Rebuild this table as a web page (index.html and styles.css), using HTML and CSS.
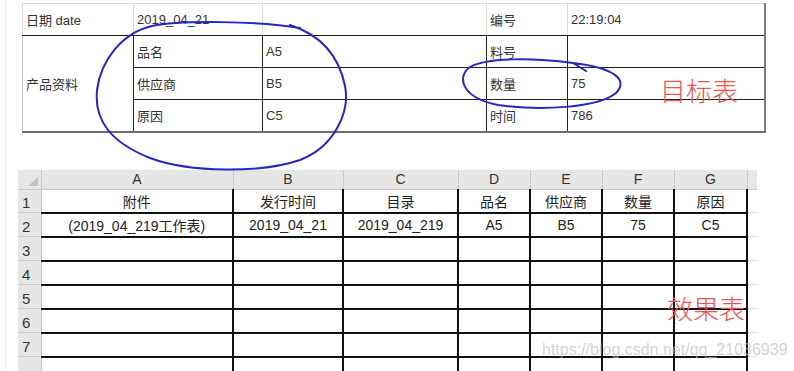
FILE: index.html
```html
<!DOCTYPE html>
<html lang="zh-CN">
  <head>
    <meta charset="UTF-8" />
    <meta name="viewport" content="width=device-width, initial-scale=1.0" />
    <title>目标表 / 效果表</title>
    <link rel="stylesheet" href="styles.css">
  </head>
  <body>
    <div class="page">
      <!-- formulario de origen -->
      <table class="form">
        <colgroup>
          <col class="w1"><col class="w2"><col class="w3"><col class="w4"><col class="w5">
        </colgroup>
        <tr class="head-row">
          <td>日期 date</td>
          <td>2019_04_21</td>
          <td></td>
          <td>编号</td>
          <td>22:19:04</td>
        </tr>
        <tr>
          <td rowspan="3" class="group">产品资料</td>
          <td>品名</td>
          <td>A5</td>
          <td>料号</td>
          <td></td>
        </tr>
        <tr>
          <td>供应商</td>
          <td>B5</td>
          <td>数量</td>
          <td>75</td>
        </tr>
        <tr class="last">
          <td>原因</td>
          <td>C5</td>
          <td>时间</td>
          <td>786</td>
        </tr>
      </table>

      <!-- hoja de resultado -->
      <table class="grid">
        <colgroup>
          <col class="g0"><col class="ga"><col class="gb"><col class="gc"><col class="gd"><col class="ge"><col class="gf"><col class="gg"><col class="gh">
        </colgroup>
        <tr class="cols">
          <th class="corner">
            <svg width="10" height="9" viewBox="0 0 10 9"><polygon points="10,0 10,9 0,9" fill="#c4c4c4"/></svg>
          </th>
          <th>A</th><th>B</th><th>C</th><th>D</th><th>E</th><th>F</th><th>G</th><th class="tail"></th>
        </tr>
        <tr class="r1">
          <th class="num">1</th>
          <td>附件</td><td>发行时间</td><td>目录</td><td>品名</td><td>供应商</td><td>数量</td><td>原因</td><td class="tail"></td>
        </tr>
        <tr>
          <th class="num">2</th>
          <td>(2019_04_219工作表)</td><td>2019_04_21</td><td>2019_04_219</td><td>A5</td><td>B5</td><td>75</td><td>C5</td><td class="tail"></td>
        </tr>
        <tr><th class="num">3</th><td></td><td></td><td></td><td></td><td></td><td></td><td></td><td class="tail"></td></tr>
        <tr><th class="num">4</th><td></td><td></td><td></td><td></td><td></td><td></td><td></td><td class="tail"></td></tr>
        <tr><th class="num">5</th><td></td><td></td><td></td><td></td><td></td><td></td><td></td><td class="tail"></td></tr>
        <tr><th class="num">6</th><td></td><td></td><td></td><td></td><td></td><td></td><td></td><td class="tail"></td></tr>
        <tr><th class="num">7</th><td></td><td></td><td></td><td></td><td></td><td></td><td></td><td class="tail"></td></tr>
        <tr><th class="num"></th><td></td><td></td><td></td><td></td><td></td><td></td><td></td><td class="tail"></td></tr>
      </table>
    </div>

    <!-- marcas a mano sobre las tablas -->
    <svg class="ink" width="794" height="371" viewBox="0 0 794 371">
      <path d="M300 28 C260 21 180 20 152 26 C122 33 101 60 97 90 C94 120 110 142 150 158 C190 173 262 173 300 160 C336 146 350 110 345 86 C339 56 321 35 290 25" />
      <path d="M586 71 L573 63 C535 58 488 57 470 67 C456 77 462 98 498 105 C540 111 598 108 616 93 C628 81 617 68 573 63" />
    </svg>
    <span class="label label-target">目标表</span>
    <span class="label label-result">效果表</span>
    <span class="mark">https://blog.csdn.net/qq_21036939</span>
  </body>
</html>
```

FILE: styles.css
```css
* {
  box-sizing: border-box;
}

body {
  margin: 0;
  position: relative;
  width: 794px;
  height: 371px;
  overflow: hidden;
  background: #fff;
  font-family: "Liberation Sans", "Noto Sans CJK SC", sans-serif;
  color: #333;
}

.page {
  margin-left: 5px;
  height: 371px;
  border-left: 1px solid #eeeeee;
  padding: 3px 0 0 12px; /* la hoja empieza en x=18 */
}

/* ---------- formulario ---------- */
.form {
  margin-left: 4px;
  width: 742px;
  border-collapse: collapse;
  table-layout: fixed;
  font-size: 13px;
}
.form .w1 { width: 111px; }
.form .w2 { width: 129px; }
.form .w3 { width: 224px; }
.form .w4 { width: 81px; }
.form .w5 { width: 197px; }

.form td {
  height: 32px;
  padding: 0 3px;
  border: 1px solid #222;
  white-space: nowrap;
  vertical-align: middle;
}
.form tr td:last-child {
  border-right: 2px solid #7a7a7a;
}
.form .head-row td {
  border-top: 1px solid #d8d8d8;
  border-left: 1px solid #d8d8d8;
  border-right: 1px solid #d8d8d8;
  border-bottom: 1px solid #222;
}
.form .group {
  border-left: 1px solid #c8c8c8;
  border-bottom: 2px solid #6e6e6e;
}
.form .last td {
  border-bottom: 2px solid #6e6e6e;
}

/* ---------- hoja ---------- */
.grid {
  margin-top: 37px;
  border-collapse: collapse;
  table-layout: fixed;
  width: 739px;
  font-size: 14px;
  color: #222;
}
.grid .g0 { width: 23px; }
.grid .ga { width: 192px; }
.grid .gb { width: 110px; }
.grid .gc { width: 115px; }
.grid .gd { width: 72px; }
.grid .ge { width: 72px; }
.grid .gf { width: 72px; }
.grid .gg { width: 73px; }
.grid .gh { width: 10px; }

.grid th {
  background: #e6e6e6;
  font-weight: normal;
  color: #333;
  border-right: 1px solid #c9c9c9;
  border-bottom: 1px solid #c9c9c9;
  padding: 0;
}
.grid .cols th {
  height: 20px;
  line-height: 18px;
  text-align: center;
}
.grid .corner {
  text-align: right;
  vertical-align: bottom;
  padding: 0 3px 3px 0;
}
.grid .corner svg {
  display: block;
  margin-left: auto;
}
.grid .num {
  text-align: left;
  vertical-align: bottom;
  padding: 0 0 0 4px;
  font-size: 15px;
  line-height: 19px;
}

.grid td {
  height: 24px;
  padding: 0;
  text-align: center;
  white-space: nowrap;
  border-right: 2px solid #111;
  border-bottom: 2px solid #111;
}
.grid .r1 td,
.grid .r1 th {
  height: 23px;
}
.grid td.tail {
  border-right: none;
  border-bottom: 1px solid #e2e2e2;
}
.grid th.tail {
  border-right: none;
}

/* ---------- marcas ---------- */
.ink {
  position: absolute;
  left: 0;
  top: 0;
  pointer-events: none;
}
.ink path {
  fill: none;
  stroke: #2626c4;
  stroke-width: 2;
  stroke-linecap: round;
}

.label {
  position: absolute;
  font-family: "Noto Sans CJK SC", sans-serif;
  font-size: 26px;
  line-height: 26px;
  font-weight: 300;
  color: #ef5252;
}
.label-target {
  left: 660px;
  top: 77px;
}
.label-result {
  left: 667px;
  top: 295px;
}

.mark {
  position: absolute;
  left: 542px;
  top: 341px;
  font-size: 16px;
  color: rgba(190, 190, 190, 0.7);
}
```
